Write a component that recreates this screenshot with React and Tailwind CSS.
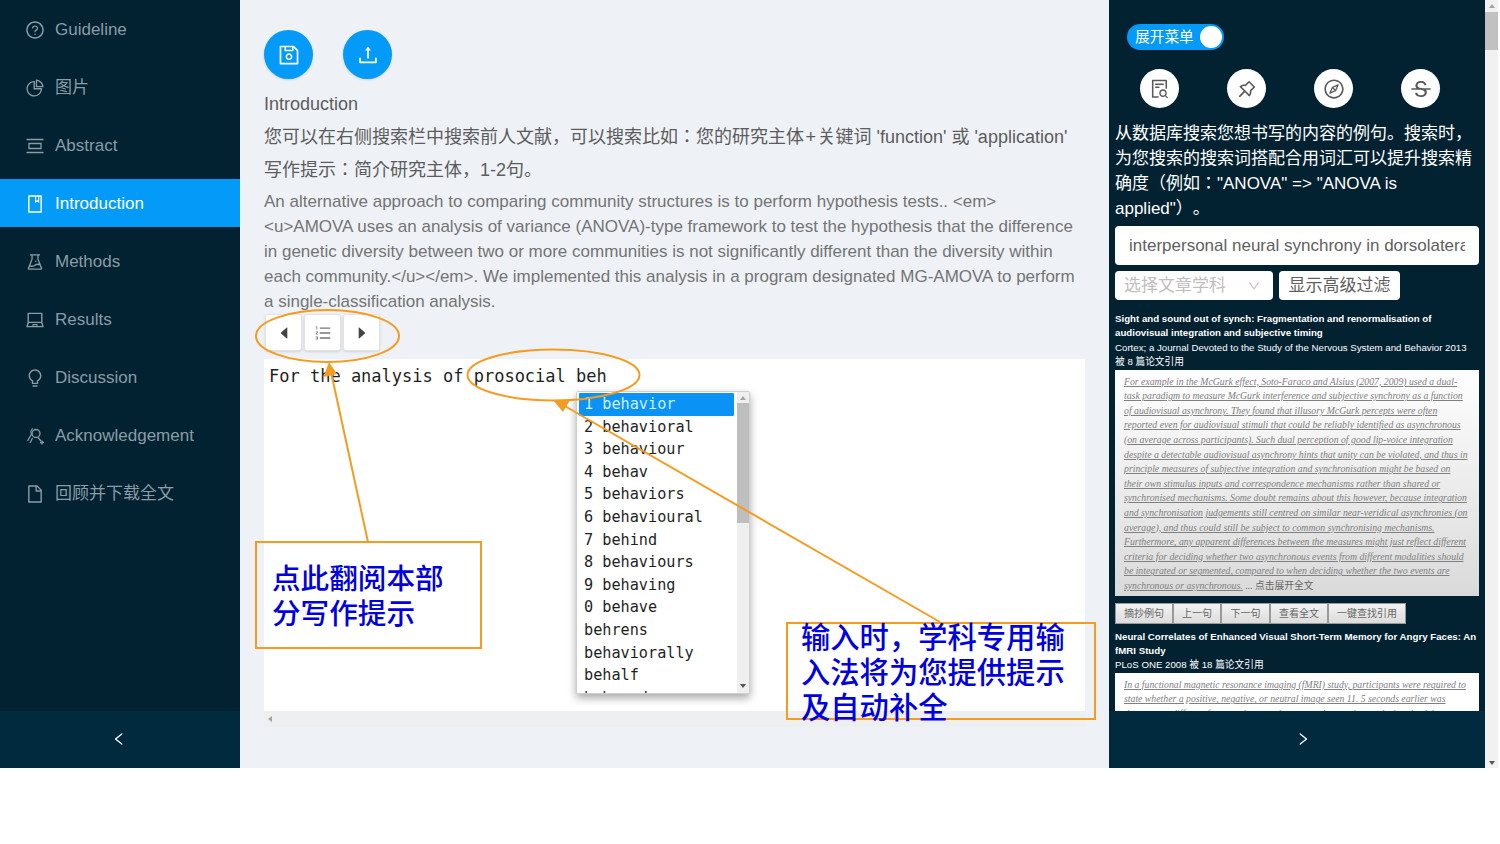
import React from "react";
import {
  AiOutlineQuestionCircle, AiOutlinePieChart, AiOutlineBook, AiOutlineExperiment, AiOutlineLaptop, AiOutlineBulb,
  AiOutlineFile, AiOutlineSave, AiOutlineUpload, AiOutlineFileSearch, AiOutlinePushpin, AiOutlineCompass,
  AiOutlineStrikethrough, AiOutlineOrderedList, AiFillCaretLeft, AiFillCaretRight, AiOutlineLeft, AiOutlineRight, AiOutlineDown,
} from "react-icons/ai";

const SANS = "font-['Liberation_Sans','Noto_Sans_CJK_JP',sans-serif]";
const MONO = "font-['DejaVu_Sans_Mono','Noto_Sans_CJK_SC',monospace]";
const SERIF = "font-['Liberation_Serif','Noto_Sans_CJK_JP',serif]";

const AbstractIcon = (p) => (
  <svg viewBox="0 0 20 20" fill="none" stroke="currentColor" strokeWidth="1.3" {...p}>
    <path d="M1.5 3.5H18.5M1.5 16.5H18.5M4 7.5H16V12.5H4Z" />
  </svg>
);
const AckIcon = (p) => (
  <svg viewBox="0 0 20 20" fill="none" stroke="currentColor" strokeWidth="1.3" {...p}>
    <circle cx="11" cy="7.5" r="4" />
    <path d="M8 2.5C6 3.5 5.5 6 6.5 8L2.5 15M7.5 12L5 17M13 11.5L16 15M15 16.5H19M17 14.5V18.5" />
  </svg>
);

const menu = [
  [AiOutlineQuestionCircle, "Guideline"],
  [AiOutlinePieChart, "图片"],
  [AbstractIcon, "Abstract"],
  [AiOutlineBook, "Introduction", true],
  [AiOutlineExperiment, "Methods"],
  [AiOutlineLaptop, "Results"],
  [AiOutlineBulb, "Discussion"],
  [AckIcon, "Acknowledgement"],
  [AiOutlineFile, "回顾并下载全文"],
];

const para = [
  "An alternative approach to comparing community structures is to perform hypothesis tests.. <em>",
  "<u>AMOVA uses an analysis of variance (ANOVA)-type framework to test the hypothesis that the difference",
  "in genetic diversity between two or more communities is not significantly different than the diversity within",
  "each community.</u></em>. We implemented this analysis in a program designated MG-AMOVA to perform",
  "a single-classification analysis.",
];

const suggestions = ["1 behavior", "2 behavioral", "3 behaviour", "4 behav", "5 behaviors", "6 behavioural", "7 behind", "8 behaviours", "9 behaving", "0 behave", "behrens", "behaviorally", "behalf", "behaved"];

const excerpt = [
  "For example in the McGurk effect, Soto-Faraco and Alsius (2007, 2009) used a dual-",
  "task paradigm to measure McGurk interference and subjective synchrony as a function",
  "of audiovisual asynchrony. They found that illusory McGurk percepts were often",
  "reported even for audiovisual stimuli that could be reliably identified as asynchronous",
  "(on average across participants). Such dual perception of good lip-voice integration",
  "despite a detectable audiovisual asynchrony hints that unity can be violated, and thus in",
  "principle measures of subjective integration and synchronisation might be based on",
  "their own stimulus inputs and correspondence mechanisms rather than shared or",
  "synchronised mechanisms. Some doubt remains about this however, because integration",
  "and synchronisation judgements still centred on similar near-veridical asynchronies (on",
  "average), and thus could still be subject to common synchronising mechanisms.",
  "Furthermore, any apparent differences between the measures might just reflect different",
  "criteria for deciding whether two asynchronous events from different modalities should",
  "be integrated or segmented, compared to when deciding whether the two events are",
];
const excerpt2 = [
  "In a functional magnetic resonance imaging (fMRI) study, participants were required to",
  "state whether a positive, negative, or neutral image seen 11. 5 seconds earlier was",
  "the same or different from a subsequently presented target image during the delay",
];

function Sidebar() {
  return (
    <aside className="w-[240px] shrink-0 bg-[#022232] flex flex-col">
      <nav className="flex-1 pt-[5px] flex flex-col gap-[10px]">
        {menu.map(([Icon, label, active]) => (
          <div key={label} className={`h-[48px] flex items-center pl-[25px] pt-[2px] gap-[10px] text-[17px] ${active ? "bg-[#039bf7] text-white" : "text-[#8a9ca6]"}`}>
            <Icon className="w-[20px] h-[20px] shrink-0" />
            <span>{label}</span>
          </div>
        ))}
      </nav>
      <div className="h-[57px] bg-[#012a3f] flex items-center justify-center text-white pr-[2px] pb-[1px]">
        <AiOutlineLeft className="w-[16px] h-[16px]" />
      </div>
    </aside>
  );
}

function Main() {
  return (
    <main className="w-[868px] shrink-0 bg-[#eef2f6] pl-[24px] pr-[23px] pt-[30px] flex flex-col">
      <div className="flex gap-[30px]">
        <div className="w-[49px] h-[49px] rounded-full bg-[#039bf7] text-white flex items-center justify-center shadow-sm"><AiOutlineSave className="w-[24px] h-[24px]" /></div>
        <div className="w-[49px] h-[49px] rounded-full bg-[#039bf7] text-white flex items-center justify-center shadow-sm"><AiOutlineUpload className="w-[24px] h-[24px]" /></div>
      </div>
      <div className="mt-[9px] text-[18px] leading-[33px] text-[#5c5c5c] whitespace-nowrap">
        <p>Introduction</p>
        <p>您可以在右侧搜索栏中搜索前人文献，可以搜索比如：您的研究主体<span className="px-[1.5px]">+</span>关键词 'function' 或 'application'</p>
        <p>写作提示：简介研究主体，1-2句。</p>
      </div>
      <div className="mt-[2px] text-[17px] leading-[25px] text-[#747474] whitespace-nowrap">
        {para.map((l) => <p key={l}>{l}</p>)}
      </div>
      <div className="flex gap-[2px] pl-px">
        {[AiFillCaretLeft, AiOutlineOrderedList, AiFillCaretRight].map((I, i) => (
          <div key={i} className="w-[37px] h-[37px] bg-white rounded-[3px] border border-[#e3e3e3] flex items-center justify-center text-[#444] shadow-sm">
            <I className={i === 1 ? "w-[18px] h-[18px] text-[#777]" : "w-[16px] h-[16px]"} />
          </div>
        ))}
      </div>
      <div className={`relative mt-[8px] h-[352px] w-[821px] bg-white ${MONO} text-[17px] text-[#1f1f1f]`}>
        <p className="pl-[5px] pt-[7px] leading-[20px] whitespace-pre">For the analysis of prosocial beh</p>
        <div className="absolute left-[312px] top-[32px] w-[174px] h-[303px] bg-white rounded-[2px] border border-[#cfcfcf] shadow-[0_4px_8px_rgba(0,0,0,0.35)] overflow-hidden flex text-[15.2px]">
          <div className="w-[160px] pl-[2px] pr-[3px] pt-[1px] shrink-0">
            {suggestions.map((s, i) => (
              <div key={s} className={`h-[22.6px] leading-[22.6px] pl-[5px] rounded-[1px] ${i === 0 ? "bg-[#0a93f5] text-[#cdeeff]" : ""}`}>{s}</div>
            ))}
          </div>
          <div className="flex-1 bg-[#efefef] flex flex-col items-center pt-[4px] relative">
            <span className="w-0 h-0 border-l-[3px] border-r-[3px] border-b-[4px] border-l-transparent border-r-transparent border-b-[#a3a3a3]" />
            <span className="mt-[3px] w-full h-[120px] bg-[#bebebe]" />
            <span className="absolute bottom-[5px] w-0 h-0 border-l-[3px] border-r-[3px] border-t-[4px] border-l-transparent border-r-transparent border-t-[#555]" />
          </div>
        </div>
      </div>
      <div className="h-[16px] w-[821px] bg-[#edeff1] flex items-center pl-[4px]">
        <span className="w-0 h-0 border-t-[3px] border-b-[3px] border-r-[4px] border-t-transparent border-b-transparent border-r-[#a3a3a3]" />
      </div>
    </main>
  );
}

function CircleBtn({ Icon }) {
  return (
    <div className="w-[39px] h-[39px] rounded-full bg-white flex items-center justify-center text-[#595959]">
      <Icon className="w-[22px] h-[22px]" />
    </div>
  );
}

function ActionRow() {
  return (
    <div className="flex mt-[7px]">
      {[["摘抄例句", 58], ["上一句", 48], ["下一句", 49], ["查看全文", 58], ["一键查找引用", 78]].map(([t, w]) => (
        <div key={t} style={{ width: w }} className="h-[21px] bg-gradient-to-b from-[#f2f2f2] to-[#dcdcdc] border border-[#999] text-[10px] text-[#666] flex items-center justify-center">{t}</div>
      ))}
    </div>
  );
}

function RightPanel() {
  return (
    <aside className="w-[377px] shrink-0 border-l border-[#eef2f6] bg-[#022232] flex flex-col text-white">
      <div className="flex-1 min-h-0 overflow-hidden px-[6px] pt-[24px]">
        <div className="ml-[12px] w-[97px] h-[26px] rounded-full bg-[#039bf7] flex items-center justify-between pl-[8px] pr-[2px] text-[14.7px]">
          <span>展开菜单</span>
          <span className="w-[22px] h-[22px] rounded-full bg-white" />
        </div>
        <div className="mt-[19px] ml-[25px] flex gap-[48px]">
          <CircleBtn Icon={AiOutlineFileSearch} />
          <CircleBtn Icon={AiOutlinePushpin} />
          <CircleBtn Icon={AiOutlineCompass} />
          <CircleBtn Icon={AiOutlineStrikethrough} />
        </div>
        <div className="mt-[13px] text-[17px] leading-[25px] whitespace-nowrap">
          <p>从数据库搜索您想书写的内容的例句。搜索时，</p>
          <p>为您搜索的搜索词搭配合用词汇可以提升搜索精</p>
          <p>确度（例如："ANOVA" =&gt; "ANOVA is</p>
          <p>applied"）。</p>
        </div>
        <div className="mt-[5px] w-[364px] h-[39px] rounded-[4px] bg-white text-[#5f5f5f] text-[17px] leading-[39px] pl-[14px] pr-[14px]">
          <div className="overflow-hidden whitespace-nowrap">interpersonal neural synchrony in dorsolateral prefrontal cortex</div>
        </div>
        <div className="mt-[6px] flex gap-[6px]">
          <div className="w-[158px] h-[29px] rounded-[4px] bg-white text-[#bfbfbf] text-[17px] flex items-center justify-between pl-[9px] pr-[12px]">
            <span>选择文章学科</span><AiOutlineDown className="w-[14px] h-[14px]" />
          </div>
          <div className="w-[121px] h-[29px] rounded-[4px] bg-white text-[#5f5f5f] text-[17px] flex items-center justify-center">显示高级过滤</div>
        </div>
        <div className="mt-[12px] w-[364px] text-[9.7px] leading-[14.4px]">
          <p className="font-bold">Sight and sound out of synch: Fragmentation and renormalisation of<br />audiovisual integration and subjective timing</p>
          <p>Cortex; a Journal Devoted to the Study of the Nervous System and Behavior 2013</p>
          <p>被 8 篇论文引用</p>
        </div>
        <div className={`w-[364px] h-[226px] bg-gradient-to-b from-white to-[#dadada] pl-[9px] pt-[5px] ${SERIF} text-[9.75px] leading-[14.6px] text-[#808080] whitespace-nowrap`}>
          {excerpt.map((l) => <p key={l} className="italic underline">{l}</p>)}
          <p><span className="italic underline">synchronous or asynchronous.</span> <span className="text-[#666]">... 点击展开全文</span></p>
        </div>
        <ActionRow />
        <div className="mt-[6px] w-[364px] text-[9.7px] leading-[14.4px]">
          <p className="font-bold">Neural Correlates of Enhanced Visual Short-Term Memory for Angry Faces: An<br />fMRI Study</p>
          <p>PLoS ONE 2008 被 18 篇论文引用</p>
        </div>
        <div className={`w-[364px] h-[60px] bg-white pl-[9px] pt-[5px] ${SERIF} text-[9.75px] leading-[14.6px] text-[#808080] whitespace-nowrap`}>
          {excerpt2.map((l) => <p key={l} className="italic underline">{l}</p>)}
        </div>
      </div>
      <div className="h-[57px] bg-[#012a3f] flex items-center justify-center text-white shrink-0 pb-[1px]">
        <AiOutlineRight className="w-[16px] h-[16px] ml-[12px]" />
      </div>
    </aside>
  );
}

function PageScrollbar() {
  return (
    <div className="w-[13px] shrink-0 bg-[#f1f1f1] flex flex-col items-center pt-[4px] relative">
      <span className="w-0 h-0 border-l-[3px] border-r-[3px] border-b-[4px] border-l-transparent border-r-transparent border-b-[#a3a3a3]" />
      <span className="mt-[4px] w-full h-[38px] bg-[#c1c1c1]" />
      <span className="absolute bottom-[3px] w-0 h-0 border-l-[3px] border-r-[3px] border-t-[4px] border-l-transparent border-r-transparent border-t-[#555]" />
    </div>
  );
}

function Annotations() {
  const O = "#f39c1f";
  return (
    <>
      <svg className="absolute left-0 top-0 pointer-events-none" width="1500" height="844" fill="none">
        <ellipse cx="327.5" cy="336" rx="71.5" ry="26" stroke={O} strokeWidth="2" />
        <ellipse cx="553.5" cy="375" rx="86" ry="25.5" stroke={O} strokeWidth="2" />
        <path d="M368 542L331 372" stroke={O} strokeWidth="2" />
        <path d="M329 362L323.5 377L337 374Z" fill={O} />
        <path d="M940 622L563 405" stroke={O} strokeWidth="2" />
        <path d="M553 400L570 400L563 412Z" fill={O} />
      </svg>
      <div className="absolute left-[255px] top-[541px] w-[227px] h-[108px] border-2 border-[#f39c1f] pl-[15px] pt-[19px] text-[#0000e0] text-[28.6px] leading-[35px] font-medium whitespace-nowrap font-['Liberation_Sans','Noto_Sans_CJK_SC',sans-serif]">
        <p>点此翻阅本部</p><p>分写作提示</p>
      </div>
      <div className="absolute left-[786px] top-[622px] w-[310px] h-[98px] border-2 border-[#f39c1f] pl-[13px] text-[#0000e0] text-[29.3px] leading-[35px] font-medium whitespace-nowrap font-['Liberation_Sans','Noto_Sans_CJK_SC',sans-serif]">
        <p className="-mt-[4px]">输入时，学科专用输</p><p>入法将为您提供提示</p><p>及自动补全</p>
      </div>
    </>
  );
}

export default function App() {
  return (
    <div className={`relative w-[1500px] h-[844px] bg-white overflow-hidden [text-spacing-trim:space-all] ${SANS}`}>
      <div className="flex h-[768px] w-[1498px]">
        <Sidebar />
        <Main />
        <RightPanel />
        <PageScrollbar />
      </div>
      <Annotations />
    </div>
  );
}
